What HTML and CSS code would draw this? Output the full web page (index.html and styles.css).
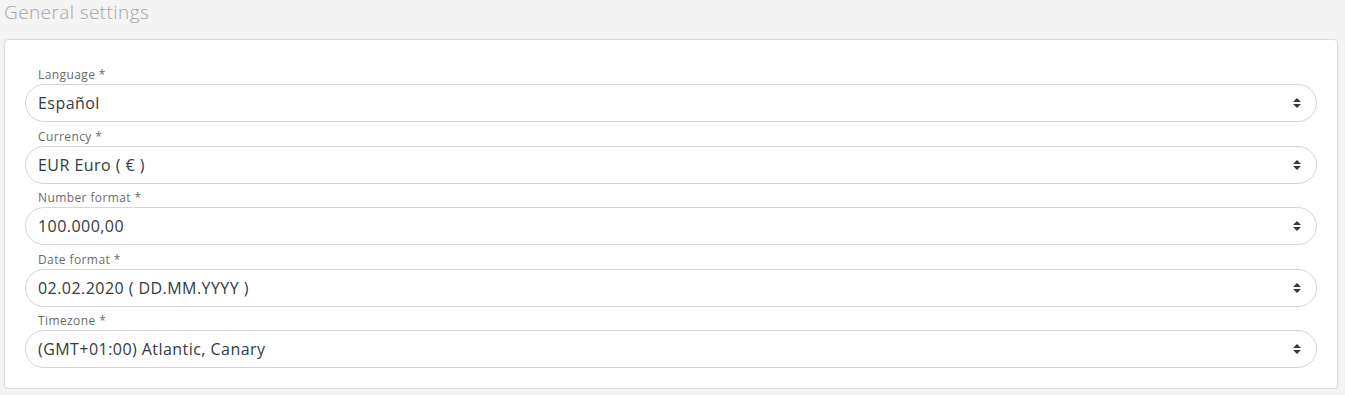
FILE: index.html
```html
<!DOCTYPE html>
<html lang="en">
<head>
    <meta charset="UTF-8">
    <meta name="viewport" content="width=device-width, initial-scale=1.0">
    <title>General settings</title>
    <link rel="stylesheet" href="styles.css">
</head>
<body>

    <h2 class="page-title">General settings</h2>

    <div class="card">
        <div class="field">
            <label for="language">Language *</label>
            <div class="select-wrap">
                <select id="language">
                    <option>Español</option>
                </select>
                <svg class="arrows" width="8" height="10" viewBox="0 0 8 10"><path d="M4 0 L8 4 H0 Z M0 6 H8 L4 10 Z" fill="#343a40"/></svg>
            </div>
        </div>
        <div class="field">
            <label for="currency">Currency *</label>
            <div class="select-wrap">
                <select id="currency">
                    <option>EUR Euro ( € )</option>
                </select>
                <svg class="arrows" width="8" height="10" viewBox="0 0 8 10"><path d="M4 0 L8 4 H0 Z M0 6 H8 L4 10 Z" fill="#343a40"/></svg>
            </div>
        </div>
        <div class="field">
            <label for="number">Number format *</label>
            <div class="select-wrap">
                <select id="number">
                    <option>100.000,00</option>
                </select>
                <svg class="arrows" width="8" height="10" viewBox="0 0 8 10"><path d="M4 0 L8 4 H0 Z M0 6 H8 L4 10 Z" fill="#343a40"/></svg>
            </div>
        </div>
        <div class="field">
            <label for="date">Date format *</label>
            <div class="select-wrap">
                <select id="date">
                    <option>02.02.2020 ( DD.MM.YYYY )</option>
                </select>
                <svg class="arrows" width="8" height="10" viewBox="0 0 8 10"><path d="M4 0 L8 4 H0 Z M0 6 H8 L4 10 Z" fill="#343a40"/></svg>
            </div>
        </div>
        <div class="field">
            <label for="timezone">Timezone *</label>
            <div class="select-wrap">
                <select id="timezone">
                    <option>(GMT+01:00) Atlantic, Canary</option>
                </select>
                <svg class="arrows" width="8" height="10" viewBox="0 0 8 10"><path d="M4 0 L8 4 H0 Z M0 6 H8 L4 10 Z" fill="#343a40"/></svg>
            </div>
        </div>
    </div>

</body>
</html>
```

FILE: styles.css
```css
body {
    font-family: "Open Sans", Arial, sans-serif;
    margin: 0;
    padding: 0 7px 0 4px;
    background-color: #f4f4f4;
}
.page-title {
    margin: 0;
    height: 39px;
    font-size: 19px;
    font-weight: 300;
    line-height: 24px;
    letter-spacing: 0.4px;
    color: #a6a6a6;
}
.card {
    background: #fff;
    border: 1px solid #dcdcdc;
    border-radius: 4px;
    box-shadow: 0 1px 3px rgba(0, 0, 0, 0.06);
    padding: 26px 20px 14px 20px;
}
.field {
    margin-bottom: 5.5px;
}
.field label {
    display: block;
    padding-left: 13px;
    font-size: 12px;
    line-height: 18px;
    letter-spacing: 0.4px;
    color: #6c6c6c;
}
.select-wrap {
    position: relative;
}
.select-wrap select {
    -webkit-appearance: none;
    appearance: none;
    width: 100%;
    height: 38px;
    padding: 0 40px 0 12px;
    border: 1px solid #d3d6dc;
    border-radius: 19px;
    background: #fff;
    font-family: "Open Sans", Arial, sans-serif;
    font-size: 16px;
    letter-spacing: 0.45px;
    color: #343a40;
}
.arrows {
    position: absolute;
    right: 16px;
    top: 14px;
    pointer-events: none;
}
```
